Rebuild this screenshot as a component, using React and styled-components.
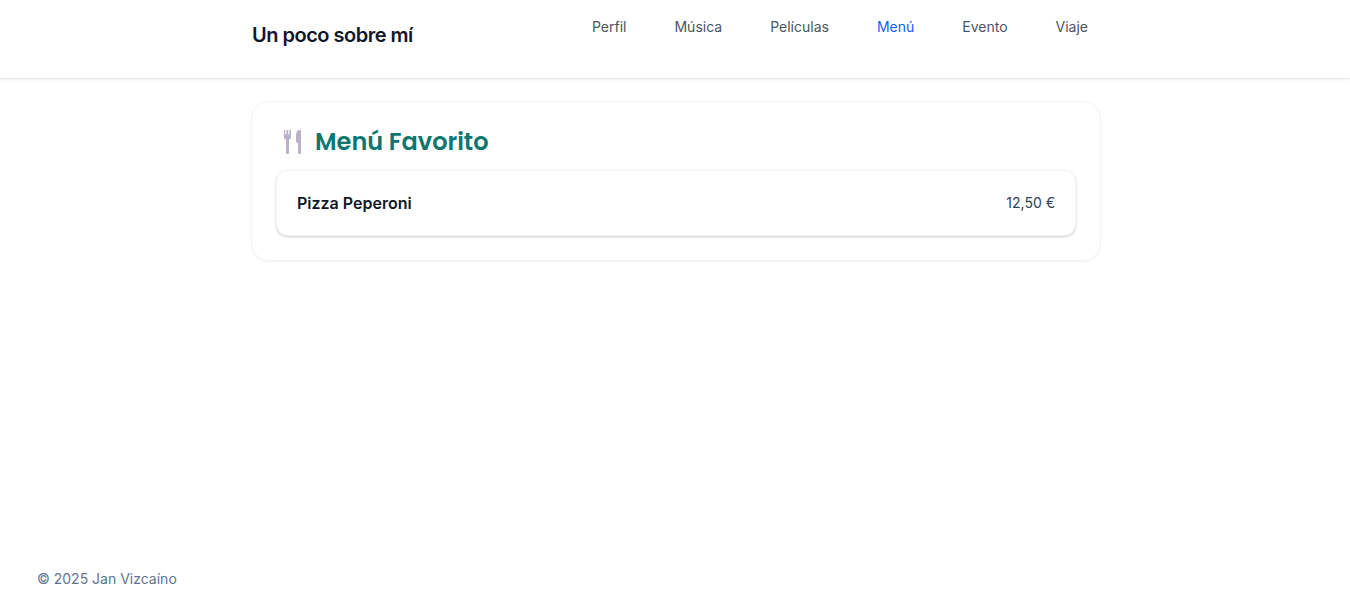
import React from "react";
import styled, { createGlobalStyle } from "styled-components";

const GlobalStyle = createGlobalStyle`
  *, *::before, *::after { box-sizing: border-box; }
  body {
    margin: 0;
    background: #fff;
    color: #0f172a;
    font-family: Inter, "Liberation Sans", sans-serif;
    font-size: 16px;
    line-height: 24px;
  }
`;

const Page = styled.div`
  display: flex;
  flex-direction: column;
  min-height: 100vh;
`;

const Header = styled.header`
  background: #fff;
  border-bottom: 1px solid #e5e7eb;
  box-shadow: 0 1px 2px rgba(0, 0, 0, 0.06);
`;

const Container = styled.div`
  width: 100%;
  max-width: 898px;
  margin: 0 auto;
  padding: 0 23px 0 25px;
`;

const HeaderBar = styled(Container)`
  display: flex;
  justify-content: space-between;
  align-items: flex-start;
  padding: 13px 24px 29px 26px;
`;

const SiteTitle = styled.h1`
  margin: 8px 0 0;
  font-size: 20px;
  line-height: 28px;
  font-weight: 600;
  letter-spacing: -0.025em;
`;

const NavList = styled.ul`
  display: flex;
  gap: 24px;
  margin: 0;
  padding: 0;
  list-style: none;
`;

const NavLink = styled.a`
  display: block;
  padding: 4px 12px;
  font-size: 14px;
  line-height: 20px;
  color: ${({ $active }) => ($active ? "#155dfc" : "#4a5565")};
  text-decoration: none;
`;

const Main = styled.main`
  flex: 1;
  padding-top: 22px;
`;

const Card = styled.section`
  padding: 24px;
  background: #fff;
  border: 1px solid #f1f5f9;
  border-radius: 18px;
  box-shadow: 0 1px 2px rgba(0, 0, 0, 0.05);
`;

const CardTitle = styled.h2`
  display: flex;
  align-items: center;
  gap: 7px;
  margin: 0 0 12px;
  color: #0f766e;
  font-family: Poppins, Inter, sans-serif;
  font-size: 24px;
  line-height: 32px;
  font-weight: 600;
`;

const MenuList = styled.ul`
  margin: 0;
  padding: 0;
  list-style: none;
`;

const MenuItem = styled.li`
  display: flex;
  justify-content: space-between;
  align-items: center;
  padding: 20px;
  background: #fff;
  border: 1px solid #f3f4f6;
  border-radius: 12px;
  box-shadow: 0 1px 3px rgba(0, 0, 0, 0.1), 0 1px 2px rgba(0, 0, 0, 0.1);
`;

const DishName = styled.span`
  font-weight: 600;
`;

const Price = styled.span`
  color: #314158;
  font-size: 14px;
`;

const Footer = styled.footer`
  padding: 11px 37px;
  color: #62748e;
  font-size: 14px;
  line-height: 20px;
`;

const sections = ["Perfil", "Música", "Películas", "Menú", "Evento", "Viaje"];
const dishes = [{ name: "Pizza Peperoni", price: "12,50 €" }];

function Cutlery() {
  return (
    <svg width="32" height="32" viewBox="0 0 32 32" fill="#bbb1c9" aria-hidden="true">
      <path d="M8 4h1.200v4.500h1.200V4h1.800v4.500h1.200V4H15v7.500c0 1.200-.7 1.700-2 2.200V27c0 1.300-3 1.300-3 0V13.700c-1.300-.5-2-1-2-2.200Z" />
      <path d="M25 5.500V27c0 1.300-3 1.300-3 0V17c-1.300-.2-2-.8-2-2V9.500c0-2.800 1-4.900 3-5.400 1.200-.2 2 .3 2 1.400Z" />
    </svg>
  );
}

export default function App() {
  return (
    <>
      <GlobalStyle />
      <Page>
        <Header>
          <HeaderBar>
            <SiteTitle>Un poco sobre mí</SiteTitle>
            <nav>
              <NavList>
                {sections.map((name) => (
                  <li key={name}>
                    <NavLink
                      href={`#${name.toLowerCase()}`}
                      $active={name === "Menú"}
                      aria-current={name === "Menú" ? "page" : undefined}
                    >
                      {name}
                    </NavLink>
                  </li>
                ))}
              </NavList>
            </nav>
          </HeaderBar>
        </Header>
        <Main>
          <Container>
            <Card>
              <CardTitle>
                <Cutlery />
                Menú Favorito
              </CardTitle>
              <MenuList>
                {dishes.map((dish) => (
                  <MenuItem key={dish.name}>
                    <DishName>{dish.name}</DishName>
                    <Price>{dish.price}</Price>
                  </MenuItem>
                ))}
              </MenuList>
            </Card>
          </Container>
        </Main>
        <Footer>© 2025 Jan Vizcaíno</Footer>
      </Page>
    </>
  );
}
